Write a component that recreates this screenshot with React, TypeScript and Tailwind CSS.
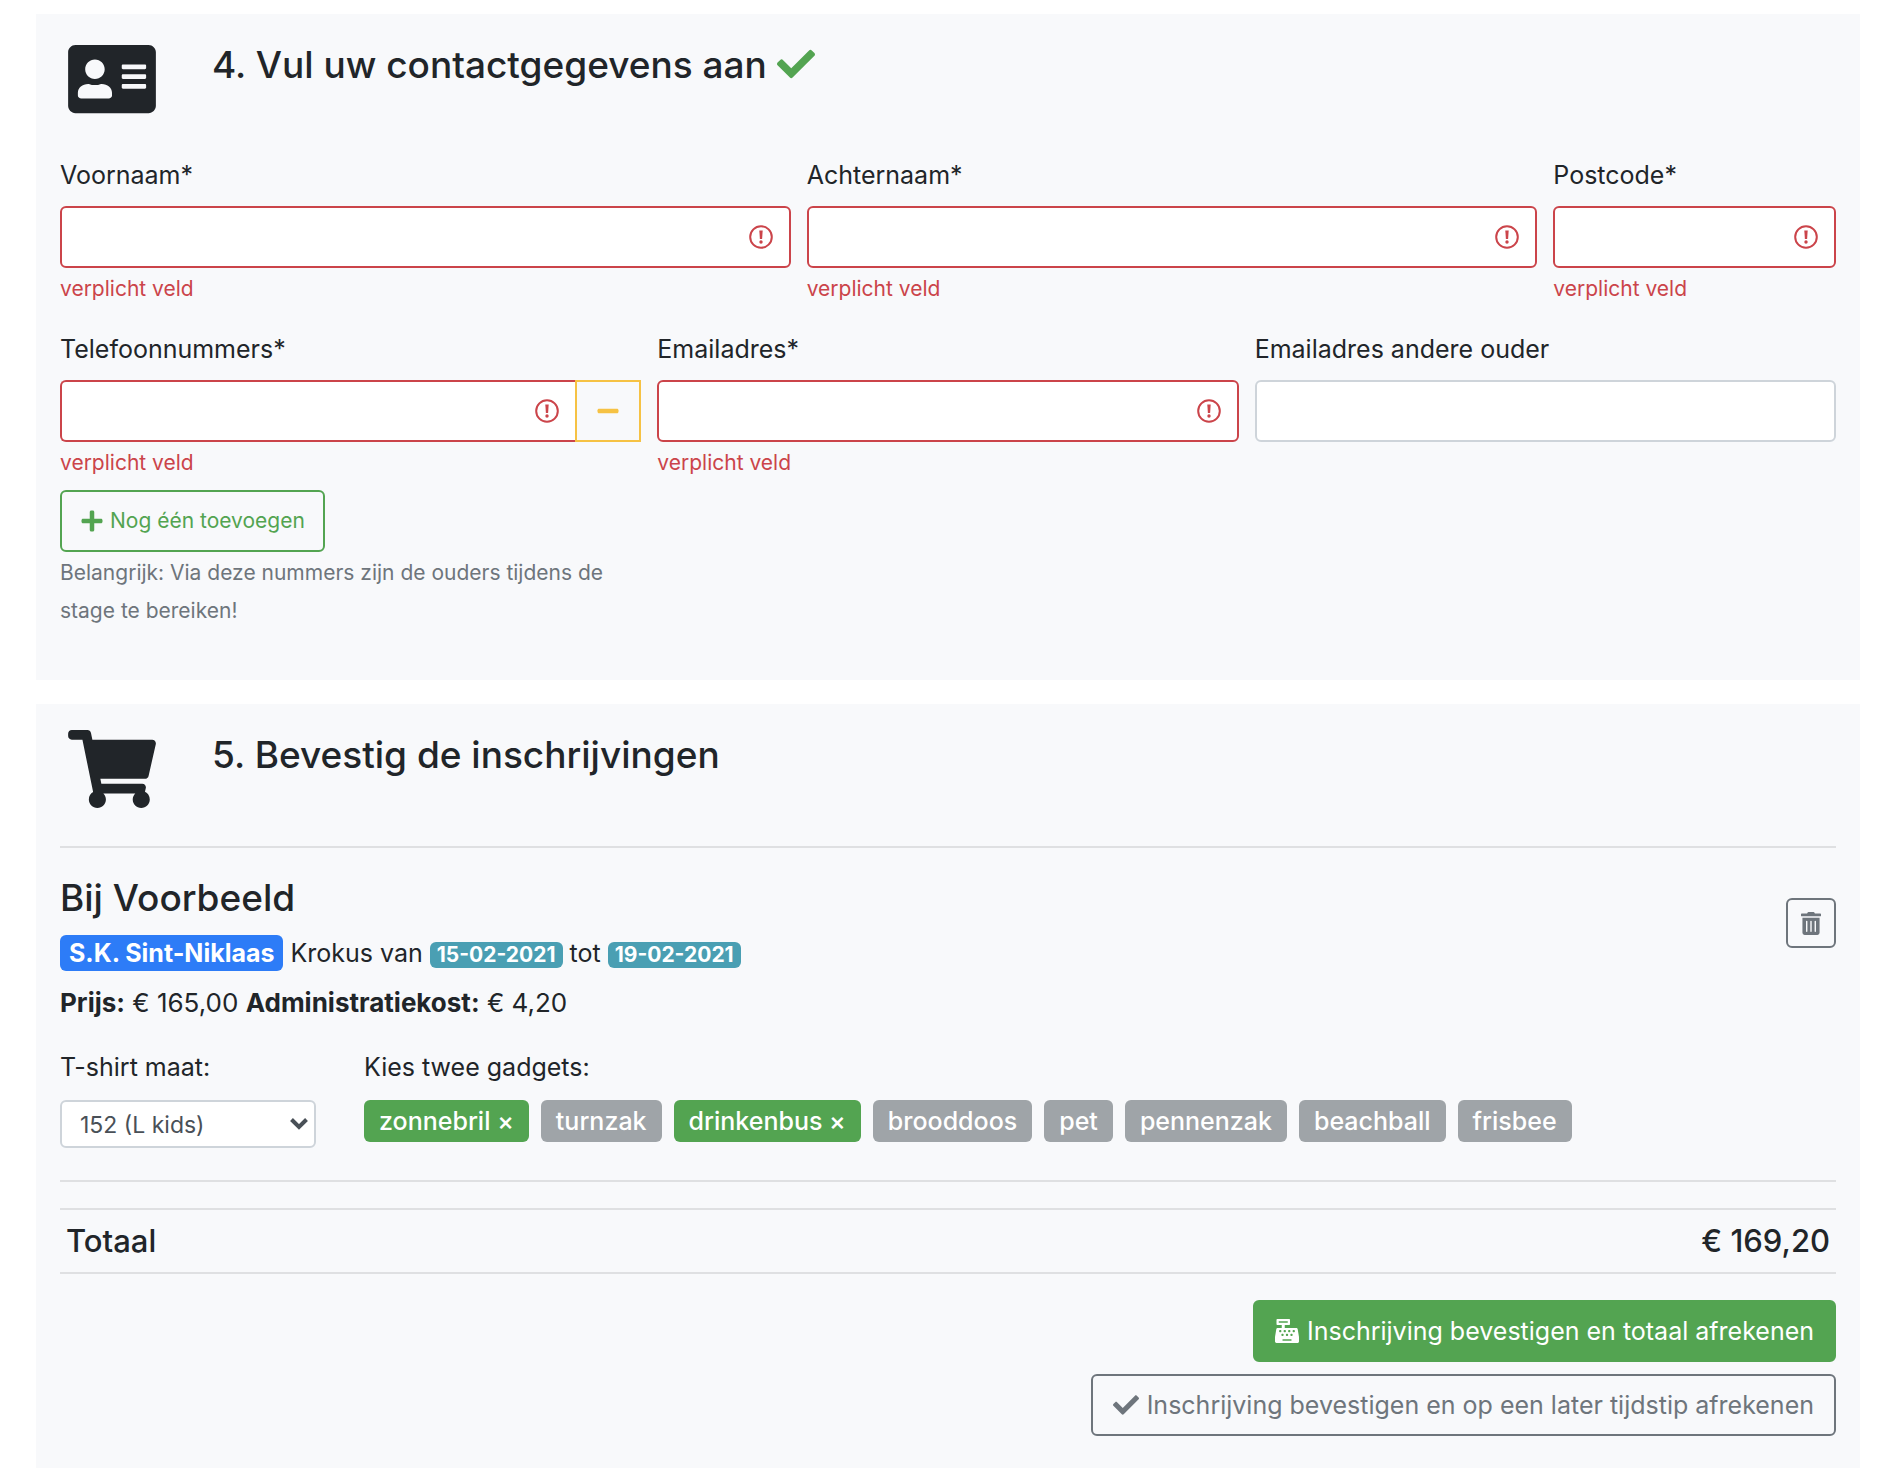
import { useState, type ReactNode } from 'react';
import { FaAddressCard, FaCashRegister, FaCheck, FaMinus, FaPlus, FaShoppingCart, FaTrashAlt } from 'react-icons/fa';

const gadgets = ['zonnebril', 'turnzak', 'drinkenbus', 'brooddoos', 'pet', 'pennenzak', 'beachball', 'frisbee'];

function InvalidIcon({ className }: { className: string }) {
  return (
    <svg viewBox="0 0 24 24" className={`pointer-events-none absolute top-1/2 size-6 -translate-y-1/2 ${className}`} fill="none" aria-hidden="true">
      <circle cx="12" cy="12" r="10.8" stroke="#cb444a" strokeWidth="2" />
      <path d="M10.300 5.500h3.400l-.6 8.500h-2.200z" fill="#cb444a" />
      <circle cx="12" cy="17" r="1.700" fill="#cb444a" />
    </svg>
  );
}

type FieldProps = { id: string; label: string; className: string; required?: boolean; type?: string; addon?: ReactNode; children?: ReactNode };

function Field({ id, label, className, required = true, type = 'text', addon, children }: FieldProps) {
  const border = required ? 'border-[#cb444a]' : 'border-[#ced4da]';
  return (
    <div className={className}>
      <label htmlFor={id} className="mb-3 block">{label}</label>
      <div className="flex">
        <div className="relative min-w-0 flex-1">
          <input id={id} type={type} className={`block h-[62px] w-full border-2 bg-white pl-5 pr-14 outline-none ${border} ${addon ? 'rounded-l-md border-r-0' : 'rounded-md'}`} />
          {required && <InvalidIcon className={addon ? 'right-4' : 'right-[18px]'} />}
        </div>
        {addon}
      </div>
      {required && <p className="mt-0.5 text-[21px] leading-[38px] text-[#cb444a]">verplicht veld</p>}
      {children}
    </div>
  );
}

function StepHeader({ icon, title }: { icon: ReactNode; title: ReactNode }) {
  return (
    <div className="mb-[38px] flex items-start gap-14 pl-2">
      {icon}
      <h3 className="text-[37px] font-medium leading-[50px]">{title}</h3>
    </div>
  );
}

export default function App() {
  const [selected, setSelected] = useState(['zonnebril', 'drinkenbus']);

  const toggle = (name: string) =>
    setSelected((prev) => (prev.includes(name) ? prev.filter((g) => g !== name) : [...prev, name]));

  return (
    <main className="flex flex-col gap-6 bg-white pl-9 pr-[30px] pt-[14px] font-['Inter',sans-serif] text-[25px] leading-[38px] text-[#212529]">
      <section className="bg-[#f8f9fb] px-6 pb-[50px] pt-[26px]">
        <StepHeader
          icon={<FaAddressCard className="h-[78px] w-[88px] shrink-0" />}
          title={<>4. Vul uw contactgegevens aan <FaCheck className="inline size-[38px] align-[-5px] text-[#53a451]" /></>}
        />
        <div className="grid grid-cols-12 gap-x-4 gap-y-[22px]">
          <Field id="voornaam" label="Voornaam*" className="col-span-5" />
          <Field id="achternaam" label="Achternaam*" className="col-span-5" />
          <Field id="postcode" label="Postcode*" className="col-span-2" />
          <Field
            id="telefoon"
            label="Telefoonnummers*"
            type="tel"
            className="col-span-4"
            addon={
              <button type="button" aria-label="Verwijderen" className="flex w-[66px] items-center justify-center border-2 border-[#f6c244] text-[#f6c244]">
                <FaMinus className="size-6" />
              </button>
            }
          >
            <button type="button" className="mt-2 flex h-[62px] items-center gap-1.5 rounded-md border-2 border-[#53a451] px-[18px] text-[21px] text-[#53a451]">
              <FaPlus className="size-6" />
              Nog één toevoegen
            </button>
            <p className="mt-0.5 text-[21px] leading-[38px] text-[#6e757c]">Belangrijk: Via deze nummers zijn de ouders tijdens de stage te bereiken!</p>
          </Field>
          <Field id="email" label="Emailadres*" type="email" className="col-span-4" />
          <Field id="email2" label="Emailadres andere ouder" type="email" required={false} className="col-span-4" />
        </div>
      </section>

      <section className="bg-[#f8f9fb] px-6 pb-8 pt-[26px]">
        <StepHeader icon={<FaShoppingCart className="h-[78px] w-[88px] shrink-0" />} title="5. Bevestig de inschrijvingen" />
        <div className="flex items-start justify-between border-t-2 border-[#dfe0e2] pt-[27px]">
          <div>
            <h3 className="mb-[7px] text-[37px] font-medium leading-[46px]">Bij Voorbeeld</h3>
            <p className="leading-[50px]">
              <span className="inline-block rounded-md bg-[#2d7cf7] px-[9px] font-bold leading-9 text-white">S.K. Sint-Niklaas</span>{' '}
              Krokus van{' '}
              <span className="inline-block rounded-md bg-[#4a9fb3] px-[7px] text-[21px] font-bold leading-[26px] text-white">15-02-2021</span>{' '}
              tot{' '}
              <span className="inline-block rounded-md bg-[#4a9fb3] px-[7px] text-[21px] font-bold leading-[26px] text-white">19-02-2021</span>
            </p>
            <p className="text-[26px] leading-[50px]"><b>Prijs:</b> € 165,00 <b>Administratiekost:</b> € 4,20</p>
          </div>
          <button type="button" aria-label="Verwijderen" className="mt-[23px] flex size-[50px] items-center justify-center rounded-md border-2 border-[#6e757c] text-[#6e757c]">
            <FaTrashAlt className="h-[23px] w-5" />
          </button>
        </div>

        <div className="mt-5 flex gap-12 border-b-2 border-[#dfe0e2] pb-8">
          <div className="w-64">
            <label htmlFor="maat" className="mb-[14px] block">T-shirt maat:</label>
            <div className="relative">
              <select id="maat" defaultValue="152" className="block h-12 w-full appearance-none rounded-md border-2 border-[#ced4da] bg-white px-[18px] pt-0.5 text-[23px] text-[#495057]">
                <option value="140">140 (M kids)</option>
                <option value="152">152 (L kids)</option>
                <option value="164">164 (XL kids)</option>
              </select>
              <svg viewBox="0 0 18 12" className="pointer-events-none absolute right-2 top-[18px] h-3 w-[18px]" fill="none" stroke="#495057" strokeWidth="4" aria-hidden="true">
                <path d="M1.500 1.500 9 9l7.500-7.500" />
              </svg>
            </div>
          </div>
          <div>
            <p className="mb-[14px]">Kies twee gadgets:</p>
            <div className="flex flex-wrap gap-3">
              {gadgets.map((name) => (
                <button
                  key={name}
                  type="button"
                  onClick={() => toggle(name)}
                  className={`h-[42px] rounded-md px-[15px] font-medium text-white ${selected.includes(name) ? 'bg-[#53a451]' : 'bg-[#9fa4a8]'}`}
                >
                  {name}{selected.includes(name) && ' ×'}
                </button>
              ))}
            </div>
          </div>
        </div>

        <table className="mt-[26px] w-full text-[31px] font-medium">
          <tbody>
            <tr className="h-16 border-y-2 border-[#dfe0e2]">
              <th scope="row" className="px-1.5 text-left font-medium">Totaal</th>
              <td className="px-1.5 text-right">€ 169,20</td>
            </tr>
          </tbody>
        </table>

        <div className="mt-[26px] flex flex-col items-end gap-3">
          <button type="button" className="flex h-[62px] items-center gap-2 rounded-md border-2 border-[#53a451] bg-[#53a451] px-5 text-white">
            <FaCashRegister className="size-6" />
            Inschrijving bevestigen en totaal afrekenen
          </button>
          <button type="button" className="flex h-[62px] items-center gap-2 rounded-md border-2 border-[#6e757c] px-5 text-[#6e757c]">
            <FaCheck className="size-[26px]" />
            Inschrijving bevestigen en op een later tijdstip afrekenen
          </button>
        </div>
      </section>
    </main>
  );
}
